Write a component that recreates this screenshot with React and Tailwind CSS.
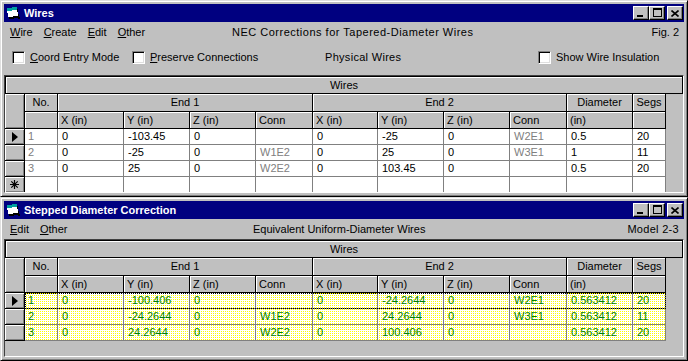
import React from 'react';

// column widths after the record selector
const W = ['w-[33px]', 'w-[66px]', 'w-[66px]', 'w-[66px]', 'w-[57px]', 'w-[65px]', 'w-[66px]', 'w-[66px]', 'w-[57px]', 'w-[66px]', 'w-[33px]'];
const SUB = ['', 'X (in)', 'Y (in)', 'Z (in)', 'Conn', 'X (in)', 'Y (in)', 'Z (in)', 'Conn', '(in)', ''];
const GRAY_COLS = [0, 4, 8];

const physical = [
  ['1', '0', '-103.45', '0', '', '0', '-25', '0', 'W2E1', '0.5', '20'],
  ['2', '0', '-25', '0', 'W1E2', '0', '25', '0', 'W3E1', '1', '11'],
  ['3', '0', '25', '0', 'W2E2', '0', '103.45', '0', '', '0.5', '20'],
];

const equivalent = [
  ['1', '0', '-100.406', '0', '', '0', '-24.2644', '0', 'W2E1', '0.563412', '20'],
  ['2', '0', '-24.2644', '0', 'W1E2', '0', '24.2644', '0', 'W3E1', '0.563412', '11'],
  ['3', '0', '24.2644', '0', 'W2E2', '0', '100.406', '0', '', '0.563412', '20'],
];

const SEL = 'w-[20px] shrink-0 bg-[#c0c0c0] border-r border-b border-black shadow-[inset_1px_1px_0_#fff,inset_-1px_-1px_0_#808080] flex items-center justify-center';

function WinIcon() {
  return (
    <svg width="16" height="16" viewBox="0 0 16 16" shapeRendering="crispEdges">
      <polygon points="3,5 13,4 14,13 4,14" fill="#000" />
      <polygon points="2,3 12,2 13,11 3,12" fill="#fff" />
      <polygon points="2,3 12,2 12.3,5 2.3,6" fill="#00a0a0" />
      <rect x="13" y="12" width="2" height="2" fill="#000" />
    </svg>
  );
}

function CapButton({ children, className = '' }) {
  return (
    <div className={`w-[16px] h-[14px] bg-[#c0c0c0] border border-t-white border-l-white border-r-black border-b-black shadow-[inset_-1px_-1px_0_#808080] flex items-center justify-center ${className}`}>
      {children}
    </div>
  );
}

function TitleBar({ title }) {
  return (
    <div className="h-[18px] shrink-0 bg-[#000080] flex items-center pl-[1px] pr-[1px]">
      <WinIcon />
      <span className="ml-[3px] text-white font-bold text-[11px]">{title}</span>
      <div className="flex-1" />
      <CapButton>
        <div className="w-[6px] h-[2px] bg-black mt-[6px] -ml-[2px]" />
      </CapButton>
      <CapButton>
        <div className="w-[9px] h-[9px] border border-black border-t-2 -mt-[1px]" />
      </CapButton>
      <CapButton className="ml-[2px]">
        <svg width="8" height="7" viewBox="0 0 8 7">
          <path d="M0.5 0.5 L7.5 6.5 M7.5 0.5 L0.5 6.5" stroke="#000" strokeWidth="1.6" />
        </svg>
      </CapButton>
    </div>
  );
}

function Win({ title, h, children }) {
  return (
    <div className={`${h} shrink-0 flex flex-col bg-[#c0c0c0] border border-t-[#dfdfdf] border-l-[#dfdfdf] border-r-black border-b-black shadow-[inset_1px_1px_0_#fff,inset_-1px_-1px_0_#808080] p-[3px] overflow-hidden`}>
      <TitleBar title={title} />
      {children}
    </div>
  );
}

function Mnemonic({ first, rest }) {
  return (
    <span>
      <span className="underline underline-offset-[1px]">{first}</span>
      {rest}
    </span>
  );
}

function Checkbox() {
  return (
    <div className="w-[13px] h-[13px] shrink-0 bg-white border border-t-[#808080] border-l-[#808080] border-r-white border-b-white shadow-[inset_1px_1px_0_#000,inset_-1px_-1px_0_#dfdfdf]" />
  );
}

function Head({ w, left, children }) {
  return (
    <div className={`${w} shrink-0 h-full flex items-center ${left ? 'justify-start pl-[3px]' : 'justify-center'} bg-[#c0c0c0] border-r border-b border-black shadow-[inset_1px_1px_0_#fff] whitespace-pre`}>
      {children}
    </div>
  );
}

function Arrow() {
  return (
    <svg width="6" height="10" viewBox="0 0 6 10" className="ml-[1px]">
      <polygon points="0,0 6,5 0,10" fill="#000" />
    </svg>
  );
}

function Star() {
  return (
    <svg width="9" height="9" viewBox="0 0 9 9">
      <path d="M4.5 0 V9 M0 4.5 H9 M1.3 1.3 L7.7 7.7 M7.7 1.3 L1.3 7.7" stroke="#000" strokeWidth="1.2" />
    </svg>
  );
}

function DataRow({ cells, green, marker, focus }) {
  const bg = green
    ? 'bg-[image:repeating-conic-gradient(#ffff00_0_25%,#ffffff_0_100%)] bg-[length:2px_2px]'
    : 'bg-white';
  return (
    <div className="flex h-[16px] shrink-0">
      <div className={SEL}>{marker}</div>
      <div className={`flex ${focus ? 'outline outline-1 outline-dotted outline-black -outline-offset-1' : ''}`}>
        {W.map((w, i) => {
          const color = green ? 'text-[#008000]' : GRAY_COLS.includes(i) ? 'text-[#808080]' : 'text-black';
          return (
            <div key={i} className={`${w} shrink-0 h-full flex items-center ${i === 0 ? 'pl-[3px]' : 'pl-[4px]'} border-r border-b border-[#808080] ${bg} ${color}`}>
              {cells ? cells[i] : ''}
            </div>
          );
        })}
      </div>
    </div>
  );
}

function Grid({ rows, green, showNew, className = '' }) {
  return (
    <div className={`flex-1 min-h-0 flex flex-col border border-t-[#404040] border-l-[#404040] border-r-white border-b-white bg-[#c0c0c0] overflow-hidden ${className}`}>
      <div className="h-[18px] shrink-0 flex items-center justify-center border border-black shadow-[inset_1px_1px_0_#fff]">
        Wires
      </div>
      <div className="flex shrink-0">
        <div className={`${SEL} h-[35px]`} />
        <div className="flex flex-col">
          <div className="flex h-[18px]">
            <Head w="w-[33px]">No.</Head>
            <Head w="w-[255px]">End 1</Head>
            <Head w="w-[254px]">End 2</Head>
            <Head w="w-[66px]">Diameter</Head>
            <Head w="w-[33px]">Segs</Head>
          </div>
          <div className="flex h-[17px]">
            {SUB.map((s, i) => (
              <Head key={i} w={W[i]} left>{s}</Head>
            ))}
          </div>
        </div>
      </div>
      {rows.map((r, i) => (
        <DataRow key={i} cells={r} green={green} marker={i === 0 ? <Arrow /> : null} focus={green && i === 0} />
      ))}
      {showNew && <DataRow cells={null} marker={<Star />} />}
    </div>
  );
}

export default function App() {
  return (
    <div className="w-[688px] h-[361px] overflow-hidden flex flex-col bg-[#c0c0c0] text-black text-[11px] leading-none font-['Liberation_Sans',Arial,sans-serif]">
      <Win title="Wires" h="h-[197px]">
        <div className="h-[20px] shrink-0 flex items-center">
          <div className="w-[228px] shrink-0 flex items-center gap-[11px] pl-[6px]">
            <Mnemonic first="W" rest="ire" />
            <Mnemonic first="C" rest="reate" />
            <Mnemonic first="E" rest="dit" />
            <Mnemonic first="O" rest="ther" />
          </div>
          <span className="tracking-[0.5px]">NEC Corrections for Tapered-Diameter Wires</span>
          <div className="flex-1" />
          <span className="pr-[5px]">Fig. 2</span>
        </div>
        <div className="h-[30px] shrink-0 flex items-center pl-[8px]">
          <div className="w-[120px] shrink-0 flex items-center gap-[5px]">
            <Checkbox />
            <Mnemonic first="C" rest="oord Entry Mode" />
          </div>
          <div className="w-[193px] shrink-0 flex items-center gap-[5px]">
            <Checkbox />
            <Mnemonic first="P" rest="reserve Connections" />
          </div>
          <div className="w-[213px] shrink-0 tracking-[0.3px]">Physical Wires</div>
          <div className="flex items-center gap-[5px]">
            <Checkbox />
            <span>Show Wire Insulation</span>
          </div>
        </div>
        <Grid rows={physical} showNew className="mt-[3px]" />
      </Win>
      <Win title="Stepped Diameter Correction" h="h-[164px]">
        <div className="h-[20px] shrink-0 flex items-center">
          <div className="w-[249px] shrink-0 flex items-center gap-[11px] pl-[6px]">
            <Mnemonic first="E" rest="dit" />
            <Mnemonic first="O" rest="ther" />
          </div>
          <span>Equivalent Uniform-Diameter Wires</span>
          <div className="flex-1" />
          <span className="pr-[5px] tracking-[0.3px]">Model 2-3</span>
        </div>
        <Grid rows={equivalent} green />
      </Win>
    </div>
  );
}
